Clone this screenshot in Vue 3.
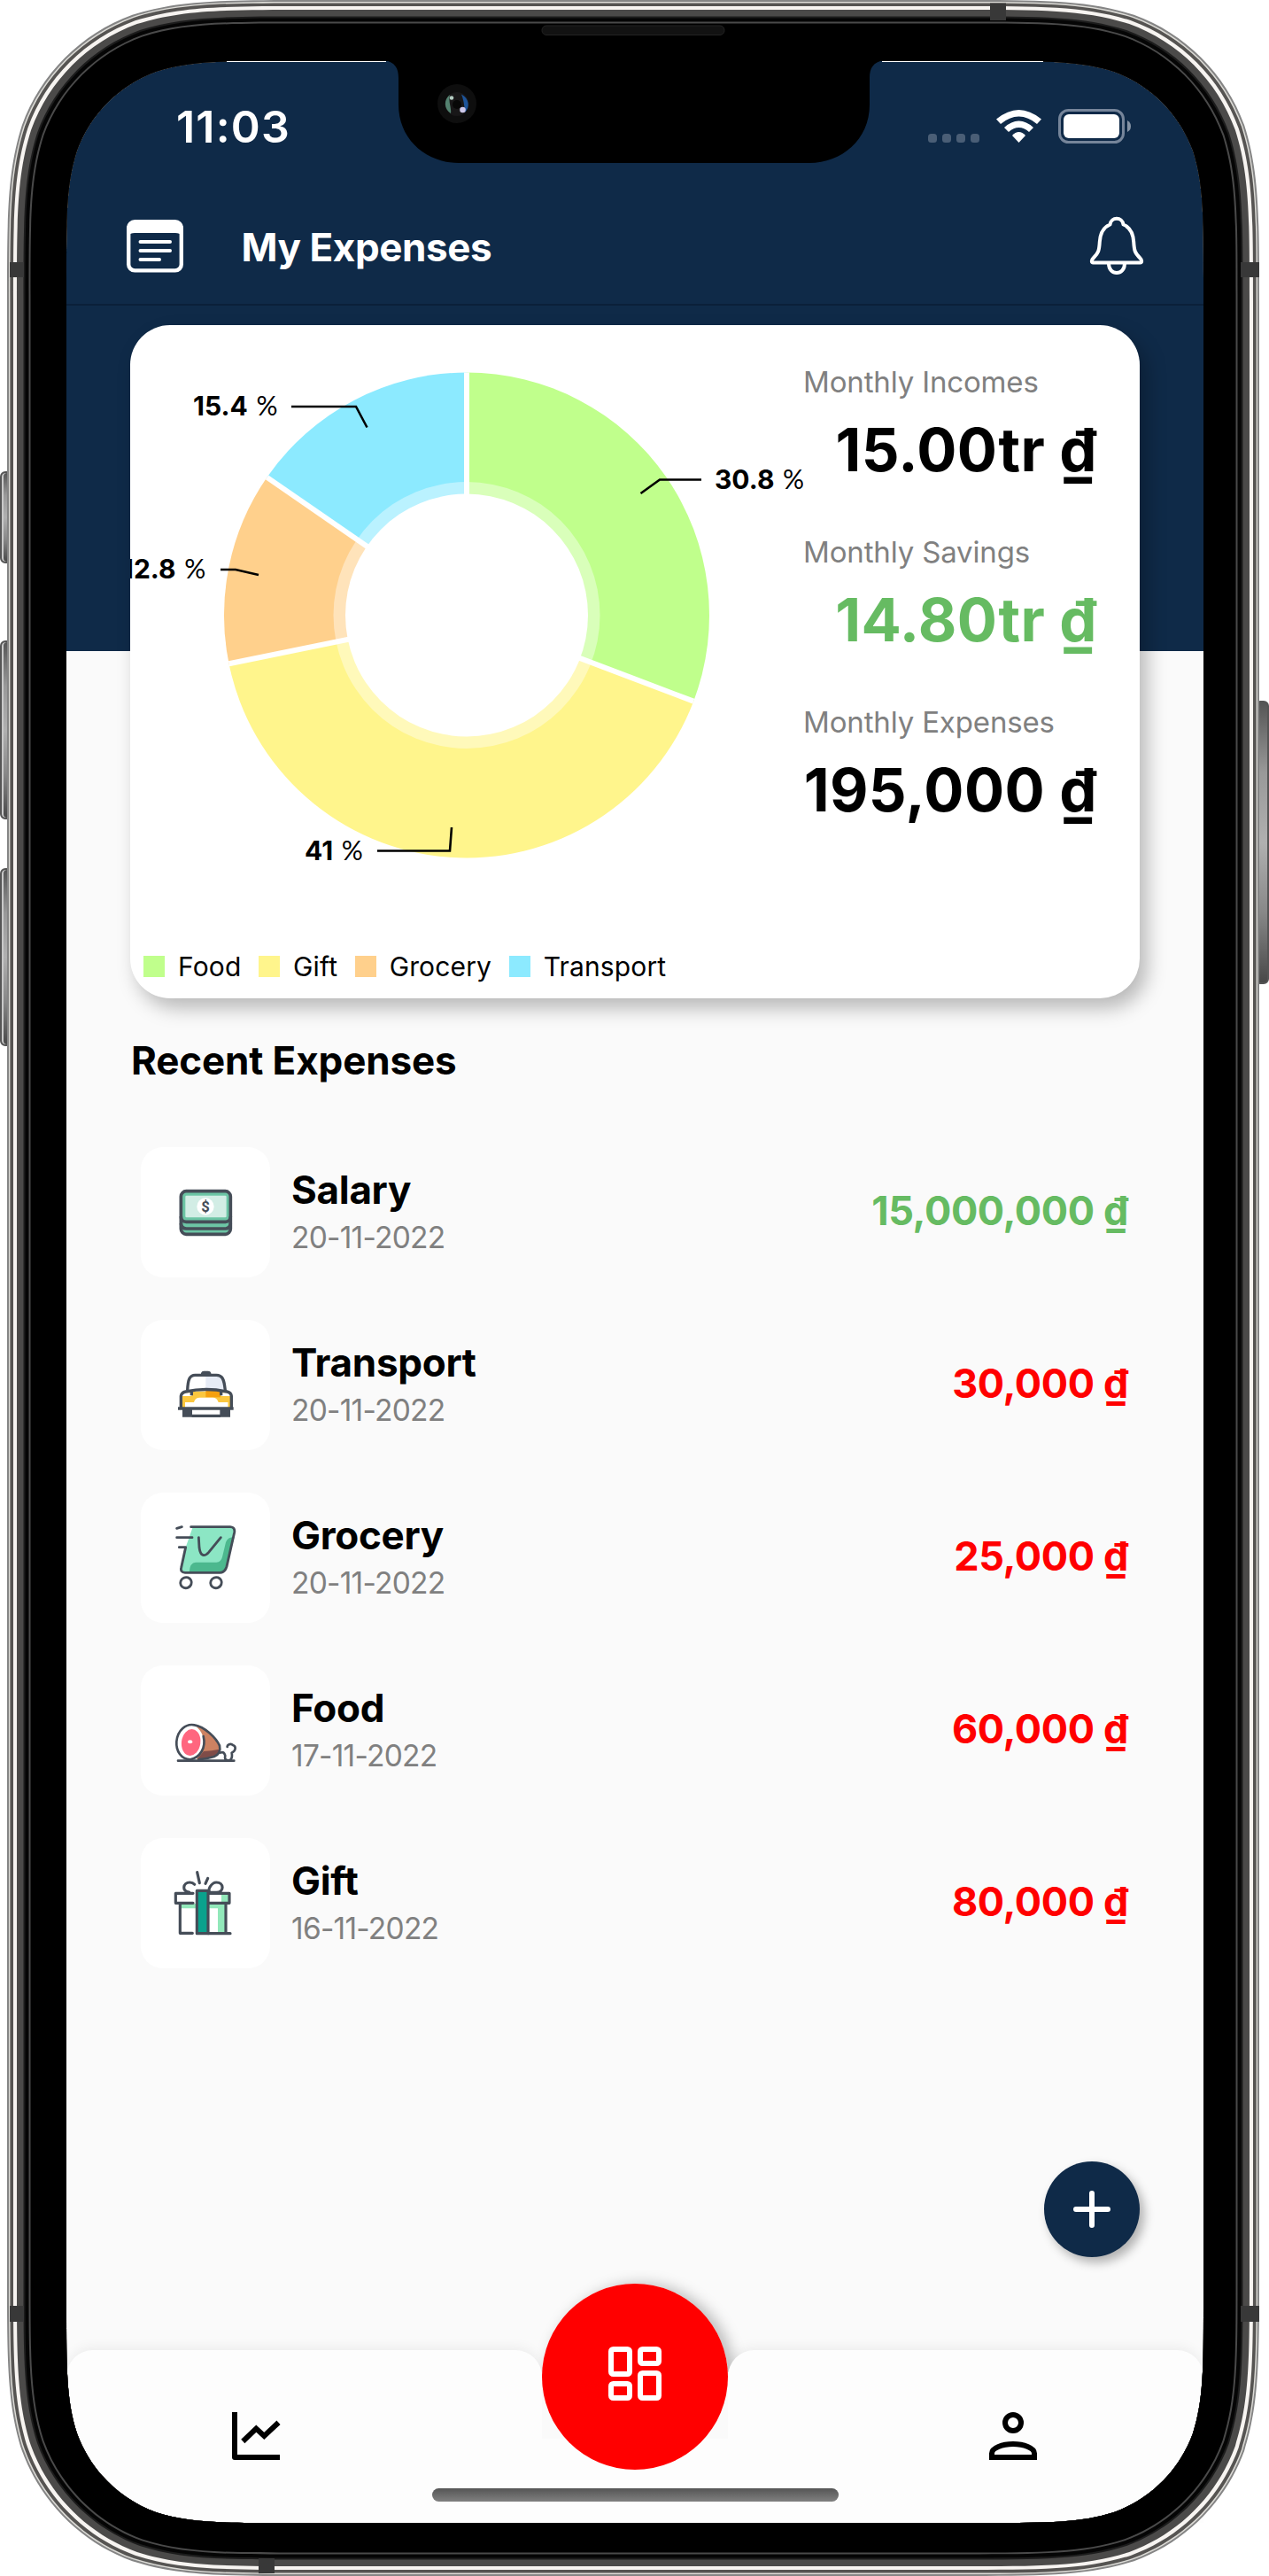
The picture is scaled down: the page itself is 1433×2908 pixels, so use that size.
<script setup>
/* Rounded rectangle with continuous-curvature corners, listed clockwise. */
function squircle(x, y, w, h, r) {
  const R = x + w
  const B = y + h
  const k = [1.52866, 1.08849, 0.86841, 0.63149, 0.07491, 0.37282, 0.16906].map((v) => v * r)
  const [a, b, c, d, e, f, g] = k
  return (
    `M${x + a} ${y}H${R - a}C${R - b} ${y} ${R - c} ${y} ${R - d} ${y + e}` +
    `C${R - f} ${y + g} ${R - g} ${y + f} ${R - e} ${y + d}C${R} ${y + c} ${R} ${y + b} ${R} ${y + a}` +
    `V${B - a}C${R} ${B - b} ${R} ${B - c} ${R - e} ${B - d}` +
    `C${R - g} ${B - f} ${R - f} ${B - g} ${R - d} ${B - e}C${R - c} ${B} ${R - b} ${B} ${R - a} ${B}` +
    `H${x + a}C${x + b} ${B} ${x + c} ${B} ${x + d} ${B - e}` +
    `C${x + f} ${B - g} ${x + g} ${B - f} ${x + e} ${B - d}C${x} ${B - c} ${x} ${B - b} ${x} ${B - a}` +
    `V${y + a}C${x} ${y + b} ${x} ${y + c} ${x + e} ${y + d}` +
    `C${x + g} ${y + f} ${x + f} ${y + g} ${x + d} ${y + e}C${x + c} ${y} ${x + b} ${y} ${x + a} ${y}Z`
  )
}

const hole = squircle(75, 69, 1284, 2779, 160)
const rings = [
  { inset: 0, r: 224, fill: '#858585' },
  { inset: 2, r: 222, fill: '#dcdbd6' },
  { inset: 3.4, r: 221, fill: '#565452' },
  { inset: 7, r: 218, fill: '#f7f4f1' },
  { inset: 11, r: 215, fill: '#4b4a49' },
  { inset: 18.5, r: 208, fill: '#1c1c1c' },
  { inset: 20.5, r: 206, fill: '#050505' },
  { inset: 24.5, r: 202, fill: '#4a4a4a' },
  { inset: 26.5, r: 200, fill: '#000' },
].map((g) => ({
  fill: g.fill,
  d: squircle(8 + g.inset, g.inset, 1414 - 2 * g.inset, 2908 - 2 * g.inset, g.r) + hole,
}))

const slices = [
  { name: 'Food', value: 60, color: '#c0ff8c' },
  { name: 'Gift', value: 80, color: '#fff58c' },
  { name: 'Grocery', value: 25, color: '#ffd08c' },
  { name: 'Transport', value: 30, color: '#8ceaff' },
]
const total = slices.reduce((s, v) => s + v.value, 0)
const cx = 380
const cy = 327.5
const outer = 274
let turn = 0
const arcs = slices.map((s) => {
  const a0 = turn
  turn += (s.value / total) * Math.PI * 2
  const a1 = turn
  const p = (a) => `${(cx + outer * Math.sin(a)).toFixed(2)} ${(cy - outer * Math.cos(a)).toFixed(2)}`
  return { color: s.color, edge: p(a0), d: `M${cx} ${cy}L${p(a0)}A${outer} ${outer} 0 0 1 ${p(a1)}Z` }
})

const callouts = [
  { text: '30.8', x: 660, y: 185, points: '576.5,190 598,174.5 645,174.5' },
  { text: '41', x: 197, y: 604, points: '279,593.5 361,593.5 363,567' },
  { text: '12.8', x: -9, y: 286, points: '102,276 119,276 145,282' },
  { text: '15.4', x: 71, y: 102, points: '182,92 255,92 267.5,115.5' },
]

const stats = [
  { label: 'Monthly Incomes', value: '15.00tr ₫', cls: '' },
  { label: 'Monthly Savings', value: '14.80tr ₫', cls: 'positive' },
  { label: 'Monthly Expenses', value: '195,000 ₫', cls: '' },
]

const items = [
  { icon: 'salary', name: 'Salary', date: '20-11-2022', amount: '15,000,000 ₫', cls: 'positive' },
  { icon: 'taxi', name: 'Transport', date: '20-11-2022', amount: '30,000 ₫', cls: 'negative' },
  { icon: 'cart', name: 'Grocery', date: '20-11-2022', amount: '25,000 ₫', cls: 'negative' },
  { icon: 'food', name: 'Food', date: '17-11-2022', amount: '60,000 ₫', cls: 'negative' },
  { icon: 'gift', name: 'Gift', date: '16-11-2022', amount: '80,000 ₫', cls: 'negative' },
]
</script>

<template>
  <div class="device">
    <i class="key left k1"></i><i class="key left k2"></i><i class="key left k3"></i><i class="key right k4"></i>
    <main class="screen">
      <div class="status">
        <span class="clock">11:03</span>
        <svg class="signals" width="232" height="42" viewBox="0 0 232 42">
          <g fill="#4a5e76">
            <rect v-for="i in 4" :key="i" :x="3 + (i - 1) * 16" y="30" width="10" height="10" rx="3.5" />
          </g>
          <g fill="#fff">
            <path d="M80 13.5Q93 3 105.500 3T131 13.500L126 19Q116 10.500 105.500 10.500T85 19Z" />
            <path d="M89 23Q97 15.500 105.500 15.500T122 23L117 28Q111.500 23 105.500 23T94 28Z" />
            <path d="M98 32Q101.500 28 105.500 28T113 32L105.500 40Z" />
            <rect x="156" y="8" width="63" height="27" rx="6" />
          </g>
          <rect x="151.500" y="3.500" width="72" height="36" rx="10" fill="none" stroke="#76859a" stroke-width="3" />
          <path d="M228 15Q232 17 232 21.500T228 28Z" fill="#8593a4" />
        </svg>
      </div>
      <header class="appbar">
        <svg width="64" height="60" viewBox="0 0 64 60" fill="none" stroke="#fff" stroke-linecap="round">
          <rect x="2.200" y="2.200" width="59.600" height="55.200" rx="7" stroke-width="4.400" />
          <path d="M2 18V9Q2 2 9 2H55Q62 2 62 9V18Q60 15 55 15H9Q4 15 2 18Z" fill="#fff" stroke="none" />
          <path d="M15.500 25H49M15.500 35H49M15.500 45H37" stroke-width="4" />
        </svg>
        <h1>My Expenses</h1>
        <svg width="62" height="68" viewBox="0 0 62 68" fill="none" stroke="#fff" stroke-width="4" stroke-linejoin="round">
          <path d="M23.500 10.500C24.500 1.500 37.500 1.500 38.500 10.500C46 13.500 49.500 20 50.200 30C50.800 40 51.500 42.500 57.500 48.500C60 51 59.500 53.500 57.500 53.500H4.500C2.500 53.500 2 51 4.500 48.500C10.500 42.500 11.200 40 11.800 30C12.500 20 16 13.500 23.500 10.500Z" />
          <path d="M22 54.500C22 68.500 40 68.500 40 54.500" />
        </svg>
      </header>

      <section class="card">
        <svg class="chart" width="760" height="690" viewBox="0 0 760 690">
          <path v-for="a in arcs" :key="a.color" :d="a.d" :fill="a.color" />
          <circle :cx="cx" :cy="cy" r="150.500" fill="#fff" opacity=".4" />
          <path v-for="a in arcs" :key="a.edge" :d="`M${cx} ${cy}L${a.edge}`" stroke="#fff" stroke-width="6" />
          <circle :cx="cx" :cy="cy" r="137" fill="#fff" />
          <g v-for="c in callouts" :key="c.text">
            <polyline :points="c.points" fill="none" stroke="#000" stroke-width="2.600" />
            <text :x="c.x" :y="c.y" class="callout">{{ c.text }}<tspan class="pct" dx="2"> %</tspan></text>
          </g>
        </svg>
        <dl class="stats">
          <template v-for="s in stats" :key="s.label">
            <dt>{{ s.label }}</dt>
            <dd :class="s.cls">{{ s.value }}</dd>
          </template>
        </dl>
        <ul class="legend">
          <li v-for="s in slices" :key="s.name"><i :style="{ background: s.color }"></i>{{ s.name }}</li>
        </ul>
      </section>

      <h2>Recent Expenses</h2>
      <ul class="list">
        <li v-for="t in items" :key="t.name">
          <span class="tile">
            <svg v-if="t.icon === 'salary'" viewBox="0 0 438 441" fill="none" stroke="#454d58" stroke-width="11">
              <rect x="136" y="149" width="168" height="146" rx="18" fill="#6cc5a5" />
              <path d="M136 235Q136 253 154 253H286Q304 253 304 235M136 258Q138 276 154 276H286Q302 276 304 258" />
              <rect x="151" y="164" width="139" height="74" rx="4" fill="#d2ede5" stroke="none" />
              <circle cx="219" cy="201" r="29" fill="#fff" stroke="none" />
              <text x="219" y="219" class="dollar">$</text>
            </svg>
            <svg v-else-if="t.icon === 'taxi'" viewBox="0 0 438 441" fill="none" stroke="#454d58" stroke-width="10" stroke-linejoin="round">
              <path d="M204 188V180Q206 173 214 173H228Q236 173 238 180V188Z" fill="#454d58" stroke="none" />
              <path d="M158 240C162 200 166 188 182 188H220V238Z" fill="#fff" stroke="none" />
              <path d="M220 188H260C276 188 282 200 286 240H220Z" fill="#e6ebf5" stroke="none" />
              <path d="M136 297V258Q138 245 152 242H292Q306 245 307 258V297Z" fill="#fbc73f" stroke="none" />
              <path d="M220 240H270V262H220Z" fill="#f5a00f" stroke="none" />
              <path d="M150 297V279H180Q184 263 200 263H244Q258 263 263 279H296V297Z" fill="#fff" stroke="none" />
              <path d="M141 247H172V258H141ZM272 247H303V258H272Z" fill="#fff" stroke="none" />
              <path d="M141 260H150V297H141ZM296 260H303V297H296Z" fill="#fbc73f" stroke="none" />
              <path d="M158 238C160 200 166 187 184 187H256C276 187 282 200 286 238" />
              <path d="M136 297V258Q138 246 152 243Q220 228 292 243Q306 246 307 258V297M172 243V256M272 243V256M126 300H314" />
              <path d="M173 325H270" />
              <path d="M141 300H174V329H141ZM268 300H303V329H268Z" fill="#454d58" stroke="none" />
            </svg>
            <svg v-else-if="t.icon === 'cart'" viewBox="0 0 438 441" fill="none" stroke="#454d58" stroke-width="8.500" stroke-linecap="round" stroke-linejoin="round">
              <path d="M176 117H306Q318 119 317 133L291 250Q286 269 270 271H148Q134 270 137 256L152 185Z" fill="#8ce6c4" stroke="none" />
              <path d="M317 150L291 250Q286 269 270 271H164Q166 236 186 236H256Q272 234 276 218L288 168Q294 150 317 150Z" fill="#4cb88e" stroke="none" />
              <path d="M170 116H303Q320 117 317 135L291 250Q286 270 268 271H150Q133 270 137 254L152 185H130M122 152H174M122 121L139 116" />
              <path d="M196 152L198 186C202 216 216 218 230 202L271 152" />
              <ellipse cx="153" cy="305" rx="19" ry="18" transform="rotate(-25 153 305)" />
              <ellipse cx="255" cy="305" rx="19" ry="18" transform="rotate(-25 255 305)" />
            </svg>
            <svg v-else-if="t.icon === 'food'" viewBox="0 0 438 441" fill="none" stroke="#454d58" stroke-width="8" stroke-linecap="round" stroke-linejoin="round">
              <path d="M190 205C220 212 256 244 268 275C270 296 262 302 245 309L190 318Z" fill="#cd8262" stroke="none" />
              <path d="M213 291Q240 290 266 284C268 298 262 304 245 310L190 319Z" fill="#7f4c48" stroke="none" />
              <ellipse cx="166" cy="260" rx="47" ry="58" fill="#fff" stroke="none" />
              <path d="M212 240C222 280 200 312 168 319C136 318 119 290 121 258C124 220 152 196 182 202C216 208 254 244 267 272C271 290 264 302 248 309Q226 316 196 319" />
              <ellipse cx="170" cy="261" rx="32" ry="45" transform="rotate(8 170 261)" fill="#ff667f" stroke="none" />
              <ellipse cx="167" cy="259" rx="8" ry="6" fill="#fff" stroke="none" />
              <path d="M270 296Q282 290 286 306Q282 322 298 322Q312 320 308 296C322 290 324 274 312 270C304 262 292 270 293 276M126 323H316" />
            </svg>
            <svg v-else viewBox="0 0 438 441" fill="none" stroke="#454d58" stroke-width="9.500" stroke-linecap="round" stroke-linejoin="round">
              <path d="M130 222H288V238H130ZM261 222H288V322H261ZM273 186H300V218H273Z" fill="#92e8ba" stroke="none" />
              <path d="M177 187H118V220H177M229 187H300V220H229M133 222V322H175M288 222V323M229 323H303" />
              <path d="M190 178H228V323H190Z" fill="#0aa28d" />
              <path d="M164 183C138 182 142 150 166 150Q176 150 182 157M236 184C222 178 240 150 256 150C282 150 284 184 256 184Z" />
              <path d="M191 116L199 152M227 136L219 154" />
            </svg>
          </span>
          <span class="what"><b>{{ t.name }}</b><small>{{ t.date }}</small></span>
          <span class="amount" :class="t.cls">{{ t.amount }}</span>
        </li>
      </ul>

      <button class="fab" aria-label="Add">
        <svg width="42" height="42" viewBox="0 0 42 42" stroke="#fff" stroke-width="6" stroke-linecap="round"><path d="M3 21H39M21 3V39" /></svg>
      </button>

      <nav class="tabs">
        <button class="home" aria-label="Dashboard">
          <svg width="60" height="61" viewBox="0 0 60 61" fill="none" stroke="#fff" stroke-width="6">
            <rect x="3" y="3" width="21" height="28" rx="2.500" />
            <rect x="3" y="42" width="21" height="16" rx="2.500" />
            <rect x="36" y="3" width="21" height="16" rx="2.500" />
            <rect x="36" y="30" width="21" height="28" rx="2.500" />
          </svg>
        </button>
        <span class="tab chart-tab">
          <svg width="72" height="72" viewBox="0 0 24 24" fill="none" stroke="#000" stroke-width="2">
            <path d="M3 3H5V19H21V21H4Q3 21 3 20Z" fill="#000" stroke="none" />
            <path d="M7.100 14L12.100 9.200L15.100 12L20.500 6.900" />
          </svg>
        </span>
        <span class="dock"></span>
        <span class="tab user-tab">
          <svg width="72" height="72" viewBox="0 0 24 24" fill="none" stroke="#000" stroke-width="2">
            <circle cx="12" cy="7" r="3" />
            <path d="M4 20V18.500C4 16.500 8 15 12 15S20 16.500 20 18.500V20Z" />
          </svg>
        </span>
        <i class="indicator"></i>
      </nav>
    </main>

    <svg class="frame" width="1433" height="2908" viewBox="0 0 1433 2908">
      <path v-for="g in rings" :key="g.fill" :d="g.d" :fill="g.fill" fill-rule="evenodd" />
      <path d="M256 69.500H436M996 69.500H1178" stroke="#fff" stroke-width="1" />
      <path d="M434 68C446 70 450 77 450 88V118C450 158 482 184 518 184H914C950 184 982 158 982 118V88C982 77 986 70 998 68Z" fill="#000" />
      <path fill="#383838" d="M1118 3.500H1136V23H1118ZM292 2888H310V2905H292ZM11 296H27V313H11ZM11 2603H27V2621H11ZM1401 296H1422V313H1401ZM1401 2603H1422V2621H1401Z" />
      <rect x="612" y="29" width="206" height="10.500" rx="5" fill="#121212" stroke="#232323" />
      <circle cx="516" cy="117" r="22" fill="#0e0e0e" />
      <circle cx="516" cy="117.500" r="13.500" fill="#181718" />
      <path d="M508 107C501 112 501 123 509 128C510 122 506 114 508 107Z" fill="#548270" />
      <path d="M521 106.500C530 111 531 121 525 127Q524 113 521 106.500Z" fill="#1d5499" />
      <circle cx="516" cy="118" r="5" fill="#070707" />
      <circle cx="510" cy="110.500" r="2.300" fill="#b4ccc2" />
      <circle cx="522.500" cy="124" r="3.300" fill="#cfc9ea" />
    </svg>
  </div>
</template>

<style>
body { margin: 0; background: #fff; }
</style>

<style scoped>
* { box-sizing: border-box; }
h1, h2, ul, dl, dd { margin: 0; padding: 0; font-weight: 700; }
ul { list-style: none; }
svg { display: block; flex: none; }
button { border: 0; padding: 0; }

.device {
  position: relative;
  width: 1433px;
  height: 2908px;
  padding: 69px 74px 60px 75px;
  overflow: hidden;
  font-family: Inter, "Open Sans", sans-serif;
  color: #000;
}
.frame { position: absolute; inset: 0; pointer-events: none; }
.key {
  position: absolute;
  width: 16px;
  border: 2px solid #555;
  border-radius: 6px;
  background: linear-gradient(#555, #999 25%, #b0b0b0 50%, #888 75%, #484848);
}
.left { left: 0; box-shadow: inset 2px 0 #c8c8c8; }
.right { right: 0; }
.k1 { top: 532px; height: 104px; }
.k2 { top: 723px; height: 202px; }
.k3 { top: 980px; height: 201px; }
.k4 { top: 791px; height: 320px; }

.screen {
  position: relative;
  display: flex;
  flex-direction: column;
  width: 1284px;
  height: 2779px;
  background: linear-gradient(#0f2a48 666px, #fafafa 666px);
}
.status {
  display: flex;
  justify-content: space-between;
  height: 145px;
  padding: 52px 82px 0 124px;
  color: #fff;
}
.clock { font: 600 50px/44px Inter, sans-serif; letter-spacing: 1.2px; }
.appbar {
  display: flex;
  height: 131px;
  padding: 28px 67px 0 68px;
  border-bottom: 2px solid #0a2039;
  color: #fff;
}
.appbar h1 { flex: 1; margin: 7px 0 0 65.5px; font-size: 44px; line-height: 60px; letter-spacing: -.43px; }
.appbar svg:first-child { margin-top: 6px; }
.appbar svg:last-child { margin-top: 1px; }

.card {
  display: grid;
  grid-template: 702px 58px / 760px 380px;
  width: 1140px;
  height: 760px;
  margin: 22px 72px 0;
  overflow: hidden;
  border-radius: 45px;
  background: #fff;
  box-shadow: 8px 11px 22px rgba(0, 0, 0, .27);
}
.callout { font-size: 30px; font-weight: 700; }
.pct { font: 400 30px Lato, sans-serif; }
.stats { padding-top: 40px; }
.stats dt { height: 48px; font-size: 33px; font-weight: 400; line-height: 48px; letter-spacing: -.15px; color: #808080; }
.stats dd { height: 144px; padding-right: 48px; font-size: 67px; line-height: 106px; letter-spacing: .4px; text-align: right; white-space: nowrap; }
.positive { color: #66bb62; }
.negative { color: #f00; }
.legend { grid-column: 1 / 3; display: flex; align-items: flex-start; padding-left: 15px; font: 400 30px/44px Inter, sans-serif; letter-spacing: .15px; }
.legend li { display: flex; align-items: center; margin-right: 19.5px; }
.legend i { width: 24px; height: 24px; margin-right: 15px; }

h2 { margin: 40px 0 0 73px; font-size: 44px; line-height: 60px; letter-spacing: -.14px; }
.list { margin-top: 68px; }
.list li { display: flex; align-items: flex-start; height: 195px; padding: 0 85px 0 84px; }
.tile { width: 146px; height: 147px; border-radius: 25px; background: #fff; }
.tile svg { width: 146px; height: 147px; }
.dollar { font: 700 50px Roboto, sans-serif; text-anchor: middle; fill: #454d58; stroke: none; }
.what { display: flex; flex-direction: column; margin-left: 24px; }
.what b { margin-top: 18px; font-size: 44px; font-weight: 700; line-height: 60px; letter-spacing: -.3px; }
.what small { font-size: 33.5px; font-weight: 400; line-height: 48px; letter-spacing: -.75px; color: #808080; }
.amount { margin: 42px 0 0 auto; font-size: 45px; font-weight: 700; line-height: 60px; letter-spacing: -.38px; }

.fab {
  position: absolute;
  right: 72px;
  bottom: 300px;
  display: grid;
  place-items: center;
  width: 108px;
  height: 108px;
  border-radius: 50%;
  background: #0f2a48;
  box-shadow: 5px 6px 12px rgba(0, 0, 0, .3);
}
.tabs { position: relative; display: flex; height: 195px; margin-top: auto; }
.tab {
  position: relative;
  flex: none;
  width: 537px;
  padding: 61px 0 0 178px;
  border-radius: 30px 30px 0 0;
  background: #fdfdfd;
  box-shadow: 0 -3px 14px rgba(0, 0, 0, .06);
}
.user-tab { padding-left: 286px; clip-path: inset(-30px 0 0 0); }
.chart-tab { clip-path: inset(-30px 0 0 0); }
.dock { flex: 1; margin-top: 100px; background: #fdfdfd; }
.home {
  position: absolute;
  left: 537px;
  top: -75px;
  z-index: 1;
  display: grid;
  place-items: center;
  width: 210px;
  height: 210px;
  padding-bottom: 7px;
  border-radius: 50%;
  background: #f00;
}
.tabs::before {
  content: "";
  position: absolute;
  left: 537px;
  top: -75px;
  width: 210px;
  height: 210px;
  border-radius: 50%;
  box-shadow: 7px 0 16px rgba(0, 0, 0, .25);
  clip-path: inset(-40px -40px 110px -40px);
}
.indicator {
  position: absolute;
  left: 413px;
  top: 156px;
  width: 459px;
  height: 15px;
  border-radius: 8px;
  background: linear-gradient(#555, #808080);
}
</style>
